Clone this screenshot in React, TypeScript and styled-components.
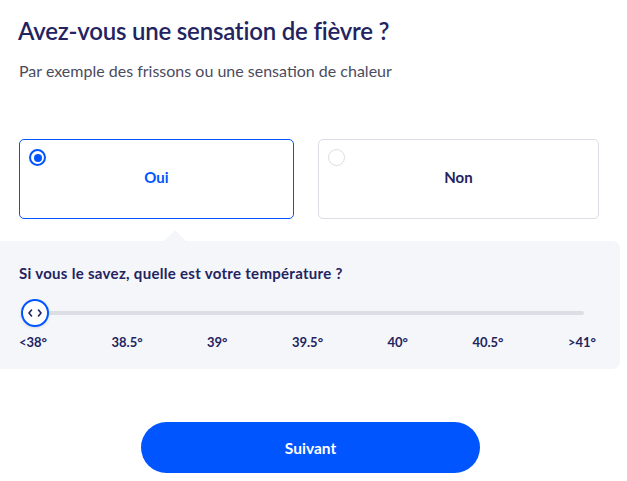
import React, { useState } from 'react'
import styled, { createGlobalStyle } from 'styled-components'

const GlobalStyle = createGlobalStyle`
body{
    margin:0;
    background:#fff;
    font-family:"Lato","Noto Sans",sans-serif;
}
`

const steps = ['<38°', '38.5°', '39°', '39.5°', '40°', '40.5°', '>41°']

function App() {
    const [answer, setAnswer] = useState<'oui' | 'non'>('oui')
    return (
        <Page>
            <GlobalStyle />
            <Head>
                <Title>Avez-vous une sensation de fièvre ?</Title>
                <Subtitle>Par exemple des frissons ou une sensation de chaleur</Subtitle>
            </Head>
            <Choices>
                <Choice selected={answer === 'oui'} onClick={() => setAnswer('oui')}>
                    <Radio selected={answer === 'oui'} />
                    Oui
                </Choice>
                <Choice selected={answer === 'non'} onClick={() => setAnswer('non')}>
                    <Radio selected={answer === 'non'} />
                    Non
                </Choice>
            </Choices>
            <Panel>
                <PanelTitle>Si vous le savez, quelle est votre température ?</PanelTitle>
                <SliderArea>
                    <Track>
                        <Thumb>
                            <svg width="14" height="8" viewBox="0 0 14 8" fill="none" stroke="#23235f" strokeWidth="1.6" strokeLinecap="round" strokeLinejoin="round">
                                <path d="M3.5 1 L1 4 L3.5 7" />
                                <path d="M10.5 1 L13 4 L10.5 7" />
                            </svg>
                        </Thumb>
                    </Track>
                    <Labels>
                        {steps.map((s) => (
                            <Label key={s}>{s}</Label>
                        ))}
                    </Labels>
                </SliderArea>
            </Panel>
            <Footer>
                <NextButton>Suivant</NextButton>
            </Footer>
        </Page>
    )
}

export default App

const Page = styled.div`
width:620px;
height:481px;
display:flex;
flex-direction:column;
box-sizing:border-box;
`
const Head = styled.div`
padding:15px 19px 0px 18px;
`
const Title = styled.div`
font-size:24px;
font-weight:600;
letter-spacing:-0.2px;
color:#23235f;
line-height:32px;
`
const Subtitle = styled.div`
margin-top:13px;
margin-left:1px;
font-size:16px;
color:#4b4b5e;
line-height:22px;
`
const Choices = styled.div`
display:grid;
grid-template-columns:275px 281px;
column-gap:24px;
margin-top:57px;
padding:0px 19px;
`
const Choice = styled.div<{ selected: boolean }>`
position:relative;
height:80px;
padding-bottom:4px;
box-sizing:border-box;
border:1px solid ${(p) => (p.selected ? '#0055ff' : '#dcdde4')};
border-radius:5px;
display:flex;
justify-content:center;
align-items:center;
font-size:15px;
font-weight:700;
color:${(p) => (p.selected ? '#0055ff' : '#23235f')};
cursor:pointer;
`
const Radio = styled.span<{ selected: boolean }>`
position:absolute;
top:9px;
left:9px;
width:17px;
height:17px;
box-sizing:border-box;
border-radius:50%;
border:${(p) => (p.selected ? '2px solid #0055ff' : '1px solid #dcdde4')};
background:#fff;
&::after{
    content:'';
    display:${(p) => (p.selected ? 'block' : 'none')};
    position:absolute;
    top:2.5px;
    left:2.5px;
    width:8px;
    height:8px;
    border-radius:50%;
    background:#0055ff;
}
`
const Panel = styled.div`
position:relative;
margin-top:22px;
background:#f5f6fa;
border-radius:0px 8px 8px 0px;
padding:22px 19px 19px 19px;
&::before{
    content:'';
    position:absolute;
    top:-11px;
    left:164px;
    border-left:11px solid transparent;
    border-right:11px solid transparent;
    border-bottom:11px solid #f5f6fa;
}
`
const PanelTitle = styled.div`
font-size:15px;
font-weight:700;
letter-spacing:0.3px;
color:#23235f;
line-height:20px;
`
const SliderArea = styled.div`
margin-top:28px;
`
const Track = styled.div`
position:relative;
height:4px;
margin:0px 17px 0px 16px;
background:#dcdee6;
border-radius:2px;
`
const Thumb = styled.div`
position:absolute;
top:-12px;
left:-14px;
width:28px;
height:28px;
box-sizing:border-box;
border-radius:50%;
background:#fff;
border:2px solid #0055ff;
display:flex;
justify-content:center;
align-items:center;
box-shadow:0px 1px 3px rgba(0,0,0,0.12);
`
const Labels = styled.div`
margin-top:19px;
padding-right:5px;
display:flex;
justify-content:space-between;
`
const Label = styled.div`
font-size:13px;
font-weight:700;
color:#23235f;
line-height:16px;
`
const Footer = styled.div`
display:flex;
justify-content:center;
margin-top:53px;
padding-left:1px;
`
const NextButton = styled.div`
width:339px;
height:51px;
border-radius:26px;
background:#0055ff;
color:#fff;
font-size:15.5px;
font-weight:700;
display:flex;
justify-content:center;
align-items:center;
cursor:pointer;
`
